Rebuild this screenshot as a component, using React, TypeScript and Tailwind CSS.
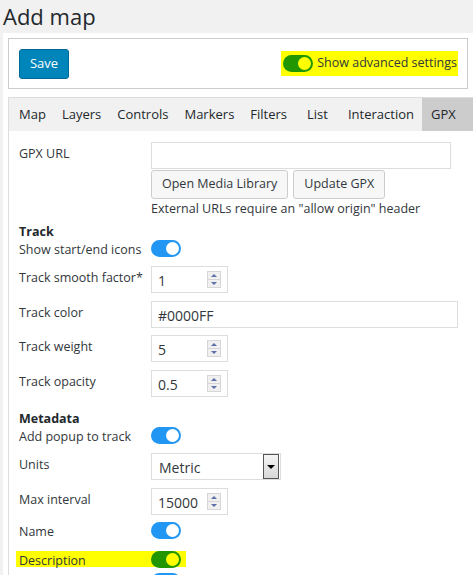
import React from "react";

const font = { fontFamily: '"Open Sans", "Noto Sans", Arial, sans-serif' };

function Toggle({ hl }: { hl?: boolean }) {
  return (
    <span
      className={`relative inline-block h-[17px] w-[30px] shrink-0 rounded-full ${hl ? "bg-[#219600]" : "bg-[#2196f3]"}`}
    >
      <span
        className={`absolute right-[2px] top-[2px] h-[13px] w-[13px] rounded-full ${hl ? "bg-[#ffff00]" : "bg-white"}`}
      />
    </span>
  );
}

function Spin() {
  return (
    <span className="flex h-[17px] w-[14px] flex-col border border-[#d6d6d6] bg-[#f0f0f0]">
      <span className="flex flex-1 items-center justify-center border-b border-[#d6d6d6]">
        <span className="h-0 w-0 border-x-[3px] border-b-[3px] border-x-transparent border-b-[#5b6fa8]" />
      </span>
      <span className="flex flex-1 items-center justify-center">
        <span className="h-0 w-0 border-x-[3px] border-t-[3px] border-x-transparent border-t-[#5b6fa8]" />
      </span>
    </span>
  );
}

function NumberBox({ value }: { value: string }) {
  return (
    <div className="flex h-[27px] w-[77px] items-center justify-between border border-[#dddddd] bg-white pl-[6px] pr-[6px] text-[14px] text-[#32373c]">
      <span className="pt-[2px]">{value}</span>
      <Spin />
    </div>
  );
}

function Row({ label, children, mt = "mt-0" }: { label: string; children: React.ReactNode; mt?: string }) {
  return (
    <div className={`flex ${mt}`}>
      <div className="w-[132px] shrink-0 pt-[3px] text-[12.5px] leading-[17px] text-[#32373c]">{label}</div>
      <div>{children}</div>
    </div>
  );
}

function ToggleRow({ label, mt = "mt-0" }: { label: string; mt?: string }) {
  return (
    <div className={`flex h-[17px] items-center ${mt}`}>
      <div className="w-[132px] shrink-0 pt-[2px] text-[12.5px] leading-[17px] text-[#32373c]">{label}</div>
      <Toggle />
    </div>
  );
}

const tabs: [string, string][] = [
  ["Map", "px-[8px]"],
  ["Layers", "px-[8px]"],
  ["Controls", "px-[8px]"],
  ["Markers", "px-[8px]"],
  ["Filters", "pl-[8px] pr-[10px]"],
  ["List", "px-[10px]"],
  ["Interaction", "pl-[10px] pr-[8px]"],
];

export default function App() {
  return (
    <div className="h-[575px] w-[473px] overflow-hidden bg-[#f1f1f1]" style={font}>
      <h1 className="h-[33px] pl-[3px] pt-[1px] text-[22px] leading-[30px] text-[#23282d]">Add map</h1>
      <div className="ml-[3px] w-[475px] bg-white px-[5px] pt-[5px]">
        <div className="flex h-[51px] w-[460px] items-center justify-between border border-[#cccccc] pl-[10px] pr-[9px]">
          <button className="h-[30px] w-[50px] rounded-[3px] border border-[#006799] bg-[#0085ba] text-[13px] text-white">
            Save
          </button>
          <div className="flex items-center gap-[4px] bg-[#ffff00] py-[3px] pl-[2px] pr-[1px]">
            <Toggle hl />
            <span className="text-[12.5px] text-[#32373c]">Show advanced settings</span>
          </div>
        </div>

        <div className="mt-[8px] w-[470px] border border-[#dddddd]">
          <div className="flex h-[33px] items-center bg-[#f1f1f1] pl-[2px] text-[13px] text-[#23282d]">
            {tabs.map(([t, pad]) => (
              <span key={t} className={`whitespace-nowrap ${pad}`}>
                {t}
              </span>
            ))}
            <span className="flex h-full flex-1 items-center whitespace-nowrap bg-[#cccccc] pl-[9px]">GPX</span>
          </div>

          <div className="bg-white pb-[20px] pl-[10px] pt-[11px]">
            <Row label="GPX URL">
              <div className="h-[27px] w-[300px] border border-[#dddddd]" />
              <div className="mt-[1px] flex gap-[5px]">
                <button className="h-[29px] rounded-[3px] border border-[#cccccc] bg-[#f7f7f7] px-[10px] text-[12.5px] text-[#32373c]">
                  Open Media Library
                </button>
                <button className="h-[29px] rounded-[3px] border border-[#cccccc] bg-[#f7f7f7] px-[10px] text-[12.5px] text-[#32373c]">
                  Update GPX
                </button>
              </div>
              <div className="mt-[1px] text-[12.5px] leading-[17px] text-[#32373c]">
                External URLs require an "allow origin" header
              </div>
            </Row>

            <div className="mt-[6px] text-[12.5px] font-bold leading-[17px] text-[#23282d]">Track</div>
            <ToggleRow label="Show start/end icons" />
            <Row label="Track smooth factor*" mt="mt-[9px]">
              <NumberBox value="1" />
            </Row>
            <Row label="Track color" mt="mt-[8px]">
              <div className="flex h-[27px] w-[307px] items-center border border-[#dddddd] pl-[6px] pt-[2px] text-[14px] text-[#32373c]">
                #0000FF
              </div>
            </Row>
            <Row label="Track weight" mt="mt-[7px]">
              <NumberBox value="5" />
            </Row>
            <Row label="Track opacity" mt="mt-[8px]">
              <NumberBox value="0.5" />
            </Row>

            <div className="mt-[13px] text-[12.5px] font-bold leading-[17px] text-[#23282d]">Metadata</div>
            <ToggleRow label="Add popup to track" />
            <Row label="Units" mt="mt-[9px]">
              <div className="flex h-[27px] w-[130px] items-center justify-between border border-[#dddddd] pl-[7px] pr-[1px] text-[14px] text-[#32373c]">
                <span className="pt-[2px]">Metric</span>
                <span className="flex h-[25px] w-[16px] items-center justify-center border border-[#555555] bg-gradient-to-b from-[#f4f4f4] to-[#d8d8d8]">
                  <span className="h-0 w-0 border-x-[4px] border-t-[4px] border-x-transparent border-t-black" />
                </span>
              </div>
            </Row>
            <Row label="Max interval" mt="mt-[8px]">
              <NumberBox value="15000" />
            </Row>
            <ToggleRow label="Name" mt="mt-[7px]" />
            <div className="-ml-[3px] mt-[12px] flex h-[16px] w-[170px] items-center bg-[#ffff00] pl-[3px]">
              <div className="w-[132px] shrink-0 pt-[3px] text-[12.5px] leading-[17px] text-[#32373c]">Description</div>
              <Toggle hl />
            </div>
            <div className="mt-[6px] flex">
              <div className="w-[132px] shrink-0" />
              <Toggle />
            </div>
          </div>
        </div>
      </div>
    </div>
  );
}
